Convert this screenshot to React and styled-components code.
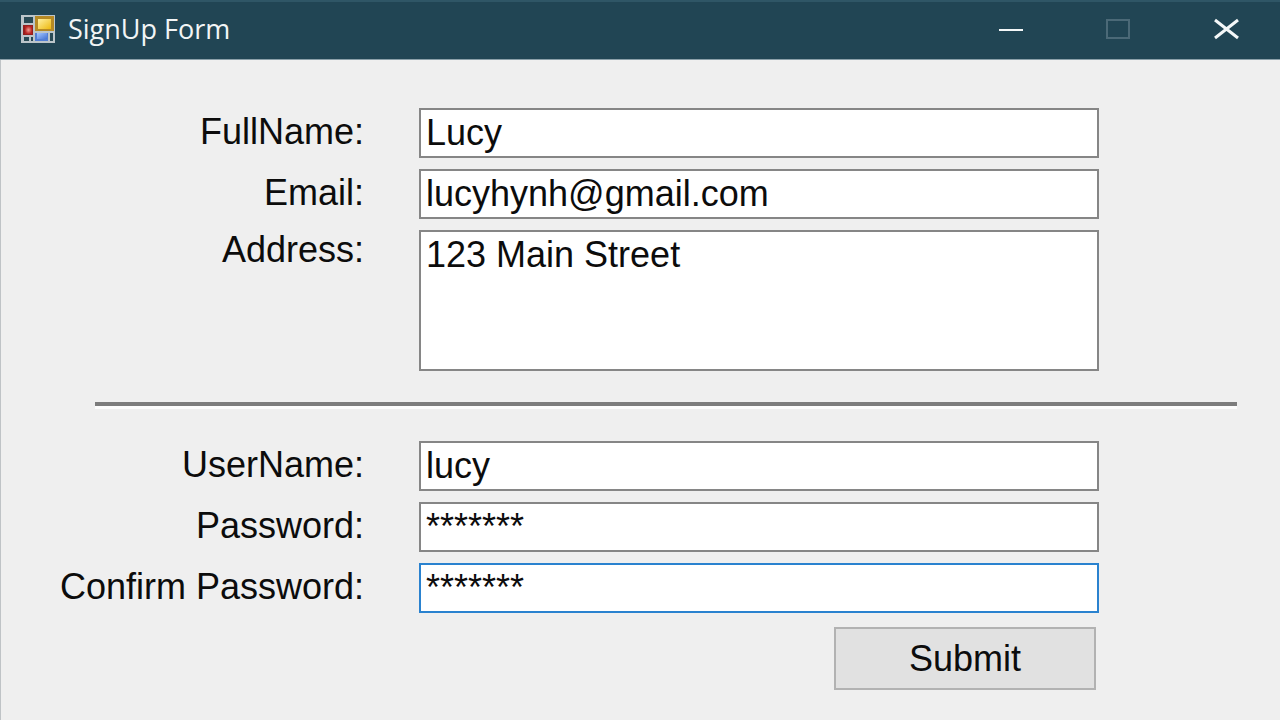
import React from 'react'
import styled, { createGlobalStyle } from 'styled-components'

const GlobalStyle = createGlobalStyle`
  * {
    box-sizing: border-box;
  }

  body {
    margin: 0;
    background: #efefef;
    font-family: 'Liberation Sans', Arial, sans-serif;
  }
`

const Window = styled.main`
  display: flex;
  flex-direction: column;
  min-height: 100vh;
  color: #0c0c0c;
`

const TitleBar = styled.header`
  display: flex;
  align-items: stretch;
  height: 60px;
  padding: 0 0 3px 21px;
  background: #214554;
  border-top: 2px solid #2f5666;
  border-bottom: 1px solid #8ba0a9;
`

const Title = styled.h1`
  display: flex;
  flex: 1;
  align-items: center;
  gap: 13px;
  margin: 0;
  color: #f2f5f6;
  font-family: 'Open Sans', 'Noto Sans', sans-serif;
  font-weight: 400;
  font-size: 27px;
  line-height: 32px;
`

const CaptionButton = styled.button`
  display: flex;
  align-items: center;
  justify-content: center;
  width: 108px;
  padding: 0;
  border: 0;
  background: transparent;
  color: #f4f7f8;

  &:hover:enabled {
    background: #34586a;
  }

  &:disabled {
    color: #4b6977;
  }
`

const Form = styled.form`
  flex: 1;
  padding: 48px 0 30px;
  border-left: 1px solid #bfc3c6;
`

const Fields = styled.div`
  display: grid;
  grid-template-columns: 323px minmax(0, 1fr);
  column-gap: 55px;
  row-gap: 11px;
  padding: 0 181px 0 40px;
`

const Label = styled.label`
  padding-top: ${({ $top }) => ($top ? 0 : 4)}px;
  font-size: 36px;
  line-height: 40px;
  text-align: right;
  white-space: nowrap;
`

const Input = styled.input`
  width: 100%;
  height: 50px;
  padding: 0 5px;
  border: 2px solid ${({ $active }) => ($active ? '#2a82cf' : '#868686')};
  border-radius: 0;
  outline: none;
  background: #fff;
  color: inherit;
  font-family: inherit;
  font-size: 36px;

  &:focus {
    border-color: #2a82cf;
  }
`

const TextArea = styled.textarea`
  display: block;
  width: 100%;
  height: 141px;
  padding: 3px 5px;
  border: 2px solid #868686;
  border-radius: 0;
  outline: none;
  resize: none;
  background: #fff;
  color: inherit;
  font-family: inherit;
  font-size: 36px;
  line-height: 40px;

  &:focus {
    border-color: #2a82cf;
  }
`

const Divider = styled.hr`
  height: 7px;
  margin: 31px 43px 32px 94px;
  border: 0;
  border-top: 4px solid #7c7c7c;
  border-bottom: 3px solid #fcfcfc;
`

const Actions = styled.div`
  display: flex;
  justify-content: flex-end;
  padding: 14px 184px 0 0;
`

const SubmitButton = styled.button`
  width: 262px;
  height: 63px;
  padding: 0;
  border: 2px solid #b2b2b2;
  background: #e1e1e1;
  color: inherit;
  font-family: inherit;
  font-size: 36px;
  line-height: 40px;

  &:hover {
    border-color: #2a82cf;
    background: #e5f1fb;
  }
`

const AppIcon = () => (
  <svg width="34" height="28" viewBox="0 0 34 28" aria-hidden="true">
    <defs>
      <linearGradient id="yellow" x1="0" y1="0" x2="1" y2="1">
        <stop offset="0" stopColor="#fff0a0" />
        <stop offset="1" stopColor="#edb90f" />
      </linearGradient>
      <linearGradient id="blue" x1="0" y1="0" x2="1" y2="1">
        <stop offset="0" stopColor="#a5c6ff" />
        <stop offset="1" stopColor="#4775d4" />
      </linearGradient>
      <radialGradient id="red">
        <stop offset="0" stopColor="#f0a095" />
        <stop offset="1" stopColor="#b82220" />
      </radialGradient>
    </defs>
    <rect width="34" height="28" fill="#bcc5ca" />
    <path d="M3 2h9v6H3zM3 22h5v4H3zM10 22h2v4h-2zM29 18h3v8h-3z" fill="#294a55" />
    <rect x="14" y="1" width="19" height="15" fill="#b68a24" />
    <rect x="17" y="4" width="13" height="10" fill="url(#yellow)" />
    <rect x="2" y="10" width="10" height="10" fill="#93201f" />
    <rect x="4" y="11" width="7" height="8" fill="url(#red)" />
    <rect x="14" y="18" width="13" height="8" fill="#537fd5" />
    <rect x="16" y="18" width="10" height="6" fill="url(#blue)" />
  </svg>
)

export default function App() {
  return (
    <>
      <GlobalStyle />
      <Window>
        <TitleBar>
          <Title>
            <AppIcon />
            SignUp Form
          </Title>
          <CaptionButton type="button" aria-label="Minimize">
            <svg width="26" height="22" viewBox="0 0 26 22">
              <path d="M2 12h24" stroke="currentColor" strokeWidth="2" />
            </svg>
          </CaptionButton>
          <CaptionButton type="button" aria-label="Maximize" disabled>
            <svg width="26" height="22" viewBox="0 0 26 22">
              <path d="M2 2h22v18H2z" fill="none" stroke="currentColor" strokeWidth="2" />
            </svg>
          </CaptionButton>
          <CaptionButton type="button" aria-label="Close">
            <svg width="26" height="22" viewBox="0 0 26 22">
              <path d="M2 2l23 18M25 2L2 20" stroke="currentColor" strokeWidth="3" />
            </svg>
          </CaptionButton>
        </TitleBar>
        <Form onSubmit={e => e.preventDefault()}>
          <Fields>
            <Label htmlFor="fullname">FullName:</Label>
            <Input id="fullname" type="text" defaultValue="Lucy" />
            <Label htmlFor="email">Email:</Label>
            <Input id="email" type="email" defaultValue="lucyhynh@gmail.com" />
            <Label htmlFor="address" $top>
              Address:
            </Label>
            <TextArea id="address" defaultValue="123 Main Street" spellCheck={false} />
          </Fields>
          <Divider />
          <Fields>
            <Label htmlFor="username">UserName:</Label>
            <Input id="username" type="text" defaultValue="lucy" />
            <Label htmlFor="password">Password:</Label>
            <Input id="password" type="text" autoComplete="off" defaultValue="*******" />
            <Label htmlFor="confirm">Confirm Password:</Label>
            <Input id="confirm" type="text" autoComplete="off" defaultValue="*******" $active />
          </Fields>
          <Actions>
            <SubmitButton type="submit">Submit</SubmitButton>
          </Actions>
        </Form>
      </Window>
    </>
  )
}
